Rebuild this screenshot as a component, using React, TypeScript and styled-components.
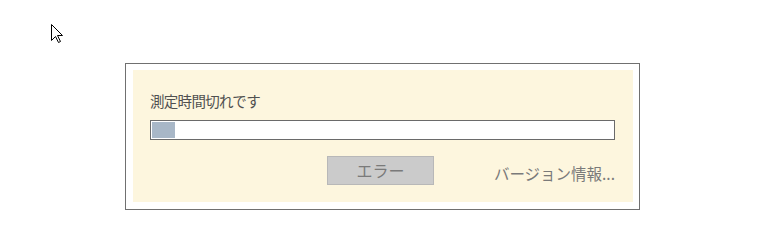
import styled, { createGlobalStyle } from 'styled-components'

const GlobalStyle = createGlobalStyle`
  html, body {
    margin: 0;
    padding: 0;
    background: #ffffff;
  }
  body {
    font-family: 'Noto Sans CJK JP', 'Noto Sans', sans-serif;
  }
`

const Page = styled.div`
  position: relative;
  width: 760px;
  height: 236px;
  padding: 63px 0 0 125px;
  box-sizing: border-box;
`

const Cursor = styled.svg`
  position: absolute;
  left: 51px;
  top: 24px;
`

const DialogFrame = styled.div`
  width: 515px;
  box-sizing: border-box;
  border: 1px solid #707070;
  padding: 6px 6px 7px 7px;
  background: #ffffff;
`

const Panel = styled.div`
  background: #fdf6de;
  padding: 21px 0 16px 17px;
  height: 132px;
  box-sizing: border-box;
`

const Message = styled.div`
  font-size: 14.5px;
  letter-spacing: -0.7px;
  line-height: 20px;
  color: #505050;
  margin-bottom: 9px;
`

const ProgressTrack = styled.div`
  width: 465px;
  height: 20px;
  box-sizing: border-box;
  border: 1px solid #6a6a6a;
  background: #ffffff;
  padding: 1px;
`

const ProgressFill = styled.div`
  height: 100%;
  background: #a8b7c7;
`

const ActionRow = styled.div`
  width: 465px;
  display: flex;
  align-items: center;
  margin-top: 16px;
`

const ErrorButton = styled.button`
  margin-left: 177px;
  width: 107px;
  height: 29px;
  box-sizing: border-box;
  border: 1px solid #b8b8b8;
  background: #cbcbcb;
  color: #7a7a7a;
  font-family: inherit;
  font-size: 16px;
  padding: 0;
  line-height: 27px;
`

const VersionLink = styled.span`
  margin-left: auto;
  margin-top: 5px;
  font-size: 15.5px;
  line-height: 20px;
  color: #7a7a7a;
  white-space: nowrap;
`

export default function App() {
  const progress = 23
  return (
    <>
      <GlobalStyle />
      <Page>
        <Cursor width="13" height="20" viewBox="0 0 13 20">
          <path
            d="M0.5 0.5 L0.5 16.5 L4.5 12.5 L7.5 18.5 L9.5 17.5 L6.5 11.5 L11.5 11.5 Z"
            fill="#ffffff"
            stroke="#000000"
            strokeWidth="1"
            strokeLinejoin="miter"
          />
        </Cursor>
        <DialogFrame>
          <Panel>
            <Message>測定時間切れです</Message>
            <ProgressTrack>
              <ProgressFill style={{ width: `${progress}px` }} />
            </ProgressTrack>
            <ActionRow>
              <ErrorButton>エラー</ErrorButton>
              <VersionLink>バージョン情報...</VersionLink>
            </ActionRow>
          </Panel>
        </DialogFrame>
      </Page>
    </>
  )
}
